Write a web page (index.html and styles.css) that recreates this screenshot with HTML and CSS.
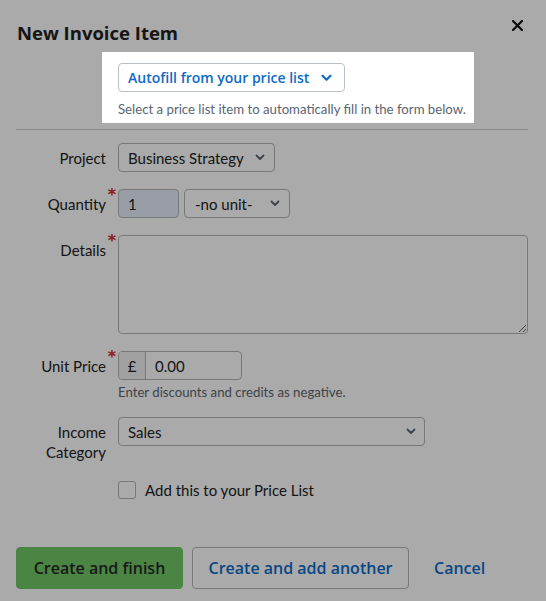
FILE: index.html
```html
<!DOCTYPE html>
<html lang="en">
<head>
<meta charset="utf-8">
<title>New Invoice Item</title>
<link rel="stylesheet" href="styles.css">
</head>
<body>
<div class="modal">
  <div class="header">
    <h1 class="title">New Invoice Item</h1>
    <span class="close" aria-label="Close">
      <svg width="11" height="11" viewBox="0 0 11 11"><path d="M1 1L10 10M10 1L1 10" stroke="#111" stroke-width="2.2" stroke-linecap="round"/></svg>
    </span>
  </div>

  <div class="spot-row">
    <div class="spotlight">
      <button class="autofill" type="button">Autofill from your price list
        <svg width="11" height="8" viewBox="0 0 11 8"><path d="M1.5 1.8L5.5 5.8L9.5 1.8" fill="none" stroke="#0d6bc9" stroke-width="2.2" stroke-linecap="round" stroke-linejoin="round"/></svg>
      </button>
      <p class="spot-hint">Select a price list item to automatically fill in the form below.</p>
    </div>
  </div>

  <hr class="divider">

  <div class="form">
    <div class="label">Project</div>
    <div class="field">
      <div class="select w-project"><span>Business Strategy</span><svg class="chev" width="10" height="7" viewBox="0 0 10 7"><path d="M1.5 1.5L5 5L8.5 1.5" fill="none" stroke="#5b6470" stroke-width="1.8" stroke-linecap="round" stroke-linejoin="round"/></svg></div>
    </div>

    <div class="label req">Quantity</div>
    <div class="field inline">
      <div class="input qty">1</div>
      <div class="select w-unit"><span>-no unit-</span><svg class="chev" width="10" height="7" viewBox="0 0 10 7"><path d="M1.5 1.5L5 5L8.5 1.5" fill="none" stroke="#5b6470" stroke-width="1.8" stroke-linecap="round" stroke-linejoin="round"/></svg></div>
    </div>

    <div class="label req">Details</div>
    <div class="field">
      <textarea class="details"></textarea>
    </div>

    <div class="label req">Unit Price</div>
    <div class="field">
      <div class="price">
        <span class="currency">£</span>
        <span class="amount">0.00</span>
      </div>
      <p class="hint">Enter discounts and credits as negative.</p>
    </div>

    <div class="label">Income<br>Category</div>
    <div class="field">
      <div class="select w-income"><span>Sales</span><svg class="chev" width="10" height="7" viewBox="0 0 10 7"><path d="M1.5 1.5L5 5L8.5 1.5" fill="none" stroke="#5b6470" stroke-width="1.8" stroke-linecap="round" stroke-linejoin="round"/></svg></div>
    </div>

    <div class="label"></div>
    <div class="field check-row">
      <span class="checkbox"></span>
      <span class="check-label">Add this to your Price List</span>
    </div>
  </div>

  <div class="actions">
    <button class="btn btn-primary" type="button">Create and finish</button>
    <button class="btn btn-secondary" type="button">Create and add another</button>
    <button class="btn btn-link" type="button">Cancel</button>
  </div>
</div>
</body>
</html>
```

FILE: styles.css
```css
html, body {
  margin: 0;
  padding: 0;
  background: #ffffff;
  overflow: hidden;
}

body {
  font-family: Lato, "Noto Sans", sans-serif;
  color: #222;
  width: 546px;
  height: 601px;
}

.modal {
  padding: 0 18px 0 16px;
}

.header {
  display: flex;
  justify-content: space-between;
  align-items: flex-start;
  padding-top: 20px;
}

.title {
  margin: 0;
  font-family: "Open Sans", "Noto Sans", sans-serif;
  font-size: 18.5px;
  font-weight: 700;
  line-height: 26px;
  padding-left: 1px;
  color: #222;
}

.close {
  display: block;
  margin-right: 5px;
  line-height: 0;
}

.spot-row {
  padding-left: 86px;
  margin-top: 6px;
}

.spotlight {
  position: relative;
  z-index: 5;
  width: 372px;
  box-sizing: border-box;
  background: #fff;
  padding: 11px 16px 6px;
  box-shadow: 0 0 0 2000px rgba(0, 0, 0, 0.335);
}

.autofill {
  display: inline-flex;
  align-items: center;
  gap: 12px;
  height: 29px;
  box-sizing: border-box;
  padding: 0 12px 0 9px;
  border: 1px solid #b9bfc6;
  border-radius: 4px;
  background: #fff;
  color: #0d6bc9;
  font-family: "Open Sans", "Noto Sans", sans-serif;
  font-size: 14px;
  font-weight: 600;
}

.spot-hint {
  margin: 9px 0 0;
  font-size: 13.2px;
  line-height: 16px;
  color: #5a6470;
  white-space: nowrap;
}

.divider {
  margin: 6px 0 0;
  border: 0;
  border-top: 1px solid #cfcfcf;
}

.form {
  display: grid;
  grid-template-columns: 90px 1fr;
  column-gap: 12px;
  row-gap: 17px;
  margin-top: 13px;
}

.label {
  position: relative;
  text-align: right;
  font-size: 15px;
  line-height: 20px;
  padding-top: 5px;
  color: #222;
}

.label.req::after {
  content: "*";
  position: absolute;
  right: -10px;
  top: -1px;
  color: #d0262a;
  font-family: "DejaVu Sans", sans-serif;
  font-size: 16px;
  font-weight: 700;
  line-height: 14px;
}

.field.inline {
  display: flex;
  gap: 5px;
}

.select, .input {
  box-sizing: border-box;
  height: 29px;
  border: 1px solid #b5b5b5;
  border-radius: 4px;
  background: #fff;
  font-size: 15px;
  color: #222;
  display: flex;
  align-items: center;
  padding: 0 9px;
}

.select {
  justify-content: space-between;
  padding-right: 9px;
}

.w-project { width: 157px; }
.w-unit { width: 106px; padding-left: 10px; }
.w-income { width: 307px; padding-right: 8px; }

.qty {
  width: 61px;
  background: #e6eefa;
}

.details {
  display: block;
  box-sizing: border-box;
  width: 410px;
  height: 99px;
  margin: 0;
  border: 1px solid #b5b5b5;
  border-radius: 4px;
  background: #fff;
  resize: vertical;
  font-family: inherit;
}

.price {
  display: flex;
  width: 124px;
  height: 29px;
  box-sizing: border-box;
  border: 1px solid #b5b5b5;
  border-radius: 4px;
  overflow: hidden;
  font-size: 15px;
}

.currency {
  width: 26px;
  display: flex;
  align-items: center;
  justify-content: center;
  background: #f0f0f0;
  border-right: 1px solid #b5b5b5;
}

.amount {
  display: flex;
  align-items: center;
  padding-left: 9px;
}

.hint {
  margin: 5px 0 0;
  font-size: 13.2px;
  line-height: 15px;
  color: #5d6670;
}

.check-row {
  display: flex;
  align-items: center;
  gap: 9px;
  margin-top: 2px;
}

.checkbox {
  width: 18px;
  height: 18px;
  box-sizing: border-box;
  border: 1px solid #b5b5b5;
  border-radius: 3px;
  background: #fff;
}

.check-label {
  font-size: 15px;
  color: #222;
}

.actions {
  display: flex;
  align-items: center;
  gap: 9px;
  margin-top: 48px;
}

.btn {
  height: 42px;
  box-sizing: border-box;
  font-family: "Open Sans", "Noto Sans", sans-serif;
  font-size: 16px;
  font-weight: 600;
  border-radius: 4px;
  padding: 0 10px;
  cursor: pointer;
  white-space: nowrap;
}

.btn-primary {
  width: 167px;
  background: #70c867;
  border: 1px solid #70c867;
  color: #262626;
}

.btn-secondary {
  width: 217px;
  background: #fff;
  border: 1px solid #b5b5b5;
  color: #0d6bc9;
}

.btn-link {
  background: transparent;
  border: 0;
  color: #0d6bc9;
  padding: 0 16px;
}
```
